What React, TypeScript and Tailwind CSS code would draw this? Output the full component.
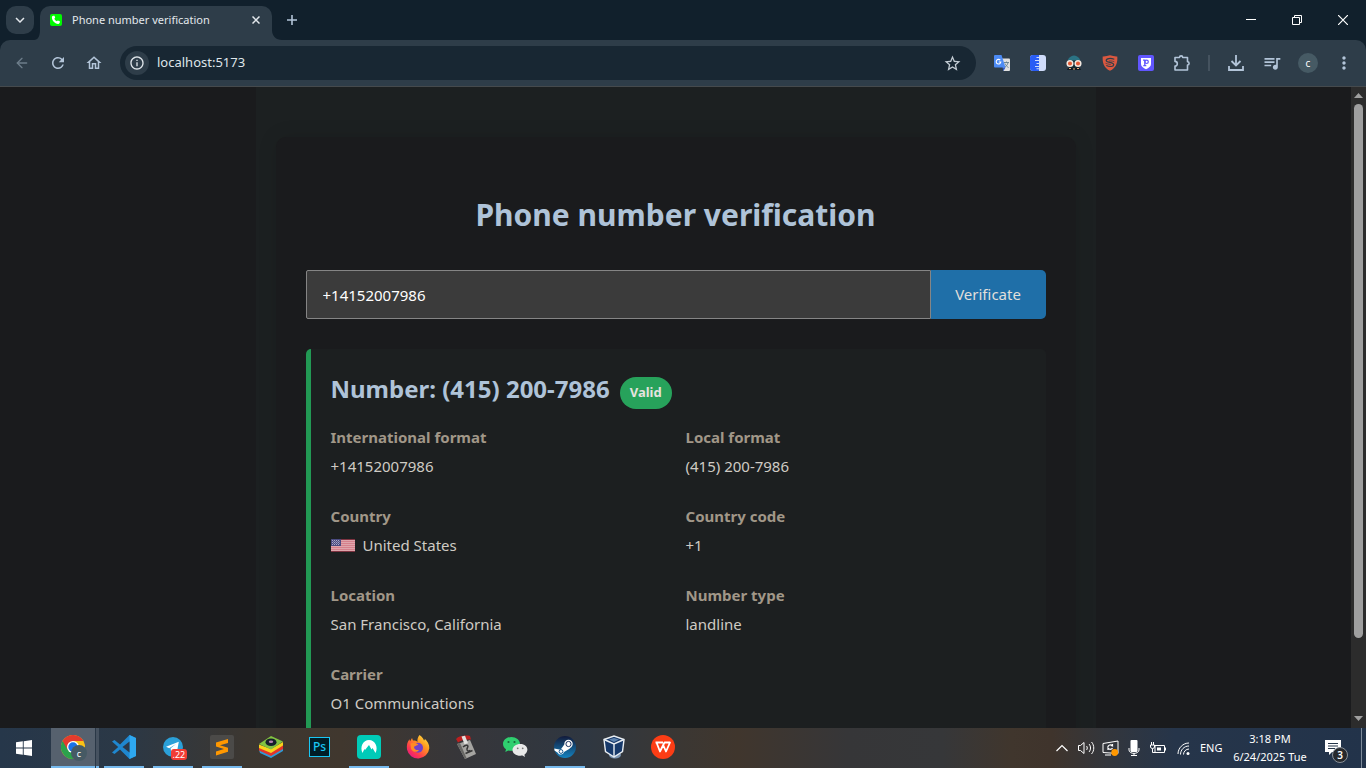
import React from "react";
import { ArrowLeft } from "lucide-react";
import {
  MdRefresh,
  MdOutlineHome,
  MdStarBorder,
  MdOutlineInfo,
  MdQueueMusic,
  MdMoreVert,
  MdKeyboardArrowDown,
} from "react-icons/md";

const iconButton = "flex size-9 shrink-0 items-center justify-center rounded-full text-[#b3c5d9]";

function TabStrip() {
  return (
    <div className="flex h-10 shrink-0 items-stretch justify-between bg-[#11202c]">
      <div className="flex">
        <button aria-label="Search tabs" className="mt-1.5 ml-1.5 flex size-7 items-center justify-center rounded-[10px] bg-[#2e3d49] text-[#e3e8ec]">
          <MdKeyboardArrowDown size={18} />
        </button>
        <div className="flex items-end">
          <svg width="6" height="10" viewBox="0 0 6 10" aria-hidden="true">
            <path d="M6 0v10H0c4 0 6-4 6-10z" fill="#2e3d49" />
          </svg>
        </div>
        <div className="mt-1.5 flex w-[232px] items-center rounded-t-[10px] bg-[#2e3d49] pr-3 pb-1.5 pl-2.5">
          <svg width="12" height="12" viewBox="0 0 12 12" aria-hidden="true">
            <rect width="12" height="12" rx="2" fill="#00f900" />
            <path d="M3.2 1.7l1.3.1.7 2-.9.9c.5 1.200 1.300 2 2.500 2.600l1-.9 2 .8c.4 1.500-.4 2.600-1.700 2.700C4.700 9.700 1.900 6.200 1.900 3.400c0-.9.5-1.600 1.300-1.700z" fill="#fff" />
          </svg>
          <span className="ml-2.5 flex-1 font-['Noto_Sans','Liberation_Sans',sans-serif] text-[11px] text-[#e3e8ec]">Phone number verification</span>
          <button aria-label="Close tab" className="flex size-2 items-center justify-center">
            <svg width="8" height="8" viewBox="0 0 8 8" stroke="#e3e8ec" strokeWidth="1.500">
              <path d="M.5.5l7 7M7.500.5l-7 7" />
            </svg>
          </button>
        </div>
        <div className="flex items-end">
          <svg width="10" height="10" viewBox="0 0 10 10" aria-hidden="true">
            <path d="M0 0v10h10C4 10 0 6 0 0z" fill="#2e3d49" />
          </svg>
        </div>
        <button aria-label="New tab" className="flex w-5 items-center justify-center text-[#b3c5d9]">
          <svg width="10" height="10" viewBox="0 0 10 10" stroke="currentColor" strokeWidth="1.600">
            <path d="M5 0v10M0 5h10" />
          </svg>
        </button>
      </div>
      <div className="flex text-white">
        <button aria-label="Minimize" className="flex w-[46px] items-center justify-center">
          <svg width="10" height="10" viewBox="0 0 10 10" stroke="currentColor"><path d="M0 4.500h10" /></svg>
        </button>
        <button aria-label="Restore" className="flex w-[46px] items-center justify-center">
          <svg width="10" height="10" viewBox="0 0 10 10" stroke="currentColor" fill="none">
            <path d="M.5 2.500h7v7h-7zM2.500 2.500v-2h7v7h-2" />
          </svg>
        </button>
        <button aria-label="Close" className="flex w-[46px] items-center justify-center">
          <svg width="10" height="10" viewBox="0 0 10 10" stroke="currentColor" strokeWidth="1.200"><path d="M0 0l10 10M10 0L0 10" /></svg>
        </button>
      </div>
    </div>
  );
}

function TranslateIcon() {
  return (
    <svg width="16" height="16" viewBox="0 0 16 16">
      <path d="M7 3.500h8a1 1 0 0 1 1 1V15a1 1 0 0 1-1 1H9.500z" fill="#e0e0e0" />
      <path d="M10 7.500h5M12.500 6.500v1M14 7.800c-.5 2-1.800 3.500-3.500 4.500M11 8.500c.6 1.600 1.800 3 3.500 4" stroke="#5f7d8c" strokeWidth=".9" fill="none" />
      <path d="M1 0h6.500l4 12.500H1a1 1 0 0 1-1-1V1a1 1 0 0 1 1-1z" fill="#4c8bf5" />
      <path d="M8.500 12.500h3L9.500 16z" fill="#2a56c6" />
      <path d="M6.300 5.200A2.300 2.300 0 1 0 6.800 7H4.800" stroke="#fff" strokeWidth="1.100" fill="none" />
    </svg>
  );
}

function RulerIcon() {
  return (
    <svg width="16" height="16" viewBox="0 0 16 16">
      <rect width="16" height="16" rx="3" fill="#cfdcfa" />
      <path d="M3 0h6v16H3a3 3 0 0 1-3-3V3a3 3 0 0 1 3-3z" fill="#2a5df5" />
      <path d="M6.500 2.500H9M5 5.500h4M6.500 8.500H9M5 11.500h4M6.500 13.800H9" stroke="#cfdcfa" strokeWidth="1.100" />
    </svg>
  );
}

function SpyIcon() {
  return (
    <svg width="16" height="16" viewBox="0 0 16 16">
      <path d="M1.500 7.500c0-4 2.500-6.500 6.500-7 4 .5 6.500 3 6.500 7z" fill="#2b7384" />
      <path d="M2 5.500h12v4l-2 5H4l-2-5z" fill="#142a31" />
      <path d="M1 15c.5-2 2-2.500 3.500-2.500L8 14l3.500-1.500c1.500 0 3 .5 3.500 2.500z" fill="#111c22" />
      <circle cx="4" cy="8.500" r="2.800" fill="#e45a35" stroke="#f3e8df" strokeWidth="1.500" />
      <circle cx="12" cy="8.500" r="2.800" fill="#e45a35" stroke="#f3e8df" strokeWidth="1.500" />
      <path d="M3 13.500h2M7 14h2M11 13.500h2" stroke="#e8a87c" strokeWidth="1.200" />
    </svg>
  );
}

function ShieldSIcon() {
  return (
    <svg width="16" height="16" viewBox="0 0 16 16">
      <path d="M8 .3c2.500.9 5 1.200 7.300 1.100.5 6.300-1.300 11.600-7.300 14.300C2 13 .2 7.700.7 1.400 3 1.500 5.500 1.200 8 .3z" fill="#db5840" />
      <path d="M12.300 4.200C8.500 3 4.300 3.200 4.200 5.500c0 2.500 7.600 1.200 7.500 4.100-.2 2.200-4 2.500-7.400.9" stroke="#2e3d49" strokeWidth="1.200" fill="none" />
      <path d="M12.300 6.700C10 5.900 7.500 5.700 6.800 6.200M3.500 8.300c2.500 1 4.800.8 5.400 1.600" stroke="#2e3d49" strokeWidth=".7" fill="none" />
    </svg>
  );
}

function ShieldPIcon() {
  return (
    <svg width="16" height="16" viewBox="0 0 16 16">
      <rect width="16" height="16" rx="2" fill="#6156ff" />
      <path d="M3 3h10v6c0 2.500-2.300 4-5 5.300C5.300 13 3 11.500 3 9z" fill="#fff" />
      <path d="M5 5.200h1.800v5.300M5.300 10.700h3" stroke="#6156ff" strokeWidth="1.300" fill="none" />
      <circle cx="8.600" cy="6.800" r="1.700" stroke="#6156ff" strokeWidth="1.200" fill="none" />
    </svg>
  );
}

function PuzzleIcon() {
  return (
    <svg width="18" height="18" viewBox="0 0 18 18" fill="none" stroke="currentColor" strokeWidth="1.600" strokeLinejoin="round">
      <path d="M2 3.500h4.500a1.600 1.600 0 0 1 3.200 0H14.500v4.300a1.600 1.600 0 0 1 0 3.200V16H2v-4a2.300 2.300 0 0 0 0-4.600z" />
    </svg>
  );
}

function Toolbar() {
  return (
    <div className="bg-[#11202c]">
      <div className="flex h-[47px] shrink-0 items-center rounded-t-[10px] border-b border-[#454a4d] bg-[#2e3d49] pr-1">
        <nav className="flex pl-1" aria-label="Browser">
          <button aria-label="Back" className="flex size-9 items-center justify-center text-[#6d7d8a]"><ArrowLeft size={16} strokeWidth={2} /></button>
          <button aria-label="Reload" className={iconButton}><MdRefresh size={18} /></button>
          <button aria-label="Home" className={iconButton}><MdOutlineHome size={18} /></button>
        </nav>
        <div className="ml-2 flex h-[34px] flex-1 items-center rounded-full bg-[#182733] pr-3.5 pl-[5px]">
          <button aria-label="Site information" className="flex size-6 items-center justify-center rounded-full bg-[#2e3d49] text-[#dfe5ea]">
            <MdOutlineInfo size={16} />
          </button>
          <input
            aria-label="Address"
            defaultValue="localhost:5173"
            className="ml-2 min-w-0 flex-1 bg-transparent font-['Noto_Sans','Liberation_Sans',sans-serif] text-[13px] text-[#dfe5ea] outline-none"
          />
          <button aria-label="Bookmark" className="text-[#c3ccd4]"><MdStarBorder size={19} /></button>
        </div>
        <div className="ml-2 flex items-center">
          <button aria-label="Translate" className={iconButton}><TranslateIcon /></button>
          <button aria-label="Ruler" className={iconButton}><RulerIcon /></button>
          <button aria-label="User agent" className={iconButton}><SpyIcon /></button>
          <button aria-label="Shield" className={iconButton}><ShieldSIcon /></button>
          <button aria-label="Protection" className={iconButton}><ShieldPIcon /></button>
          <button aria-label="Extensions" className={iconButton}><PuzzleIcon /></button>
          <div className="mx-2 h-4 w-0.5 bg-[#45535f]" />
          <button aria-label="Downloads" className={iconButton}>
            <svg width="16" height="16" viewBox="0 0 16 16" fill="none" stroke="currentColor" strokeWidth="1.800">
              <path d="M8 0v10M3.500 6L8 10.500 12.500 6M1 11v4h14v-4" />
            </svg>
          </button>
          <button aria-label="Media" className={iconButton}><MdQueueMusic size={20} /></button>
          <button aria-label="Profile" className={iconButton}>
            <span className="flex size-5 items-center justify-center rounded-full bg-[#465a64] font-['Noto_Sans',sans-serif] text-[10px] text-white">c</span>
          </button>
          <button aria-label="Menu" className={iconButton}><MdMoreVert size={20} /></button>
        </div>
      </div>
    </div>
  );
}

function UsFlag() {
  return (
    <svg width="24" height="13" viewBox="0 0 24 13" role="img" aria-label="United States flag">
      <rect width="24" height="13" fill="#dfa5ac" />
      <path d="M0 2.500h24M0 4.500h24M0 6.500h24M0 8.500h24M0 10.500h24" stroke="#d5808c" />
      <path d="M0 .5h24M0 12.500h24" stroke="#7d3340" />
      <rect width="10" height="7" fill="#4a4a80" />
      <path d="M1 1.500h8M1 3.500h8M1 5.500h8" stroke="#a9a9c6" strokeDasharray="1 1" />
      <path d="M2 2.500h8M2 4.500h8" stroke="#8787ae" strokeDasharray="1 1" />
    </svg>
  );
}

const details: { label: string; value: string; flag?: boolean }[] = [
  { label: "International format", value: "+14152007986" },
  { label: "Local format", value: "(415) 200-7986" },
  { label: "Country", value: "United States", flag: true },
  { label: "Country code", value: "+1" },
  { label: "Location", value: "San Francisco, California" },
  { label: "Number type", value: "landline" },
  { label: "Carrier", value: "O1 Communications" },
];

function VerificationPage() {
  return (
    <main className="flex min-w-0 flex-1 justify-center overflow-hidden bg-[#1a1b1d] font-['Noto_Sans','Open_Sans',sans-serif] text-[15px] text-[#cfcbc4]">
      <div className="w-full max-w-[840px] self-start bg-[#1c2021] px-5 py-[50px]">
        <section className="rounded-[10px] bg-[#1a1b1d] p-[30px] shadow-[0_0_20px_rgba(0,0,0,0.1)]">
          <h1 className="pt-5 pb-7 text-center text-[30px] leading-[55px] font-bold text-[#afc3d8]">Phone number verification</h1>
          <form className="flex" onSubmit={(e) => e.preventDefault()}>
            <input
              aria-label="Phone number"
              defaultValue="+14152007986"
              className="h-[49px] min-w-0 flex-1 rounded-l-[2px] border border-[#858585] bg-[#3b3b3b] px-4 text-white outline-none"
            />
            <button className="h-[49px] w-[115px] rounded-r-[5px] bg-[#1f6fa8] text-[#e1dfdb]">Verificate</button>
          </form>
          <article className="mt-[30px] rounded-[5px] border-l-[5px] border-[#229954] bg-[#1c1f20] px-5 pt-5 pb-10">
            <div className="flex items-center gap-2.5">
              <h2 className="text-2xl leading-8 font-bold text-[#afc3d8]">Number: (415) 200-7986</h2>
              <span className="mt-2 flex h-8 items-center rounded-full bg-[#27a25b] px-2.5 text-[13px] font-bold text-[#e5e3df]">Valid</span>
            </div>
            <dl className="mt-3.5 grid grid-cols-2 gap-x-[15px] gap-y-[21px]">
              {details.map((d) => (
                <div key={d.label}>
                  <dt className="leading-[29px] font-bold text-[#a19788]">{d.label}</dt>
                  <dd className="flex items-center gap-2 leading-[29px]">
                    {d.flag && <UsFlag />}
                    {d.value}
                  </dd>
                </div>
              ))}
            </dl>
          </article>
        </section>
      </div>
    </main>
  );
}

function ScrollBar() {
  return (
    <div className="flex w-[15px] shrink-0 flex-col items-center bg-[#2c2c2c]" aria-hidden="true">
      <svg width="15" height="17" viewBox="0 0 15 17"><path d="M3 11h9L7.500 6z" fill="#9f9f9f" /></svg>
      <div className="flex w-full flex-1 justify-center">
        <div className="h-[88%] w-[9px] rounded-full bg-[#9f9f9f]" />
      </div>
      <svg width="15" height="17" viewBox="0 0 15 17"><path d="M3 5h9l-4.500 5z" fill="#9f9f9f" /></svg>
    </div>
  );
}

function ChromeLogo() {
  return (
    <span className="relative flex">
      <svg width="24" height="24" viewBox="0 0 24 24">
        <circle cx="12" cy="12" r="12" fill="#fbc116" />
        <path d="M12 12L1.600 6A12 12 0 0 0 12 24l5.200-9z" fill="#2ba24c" />
        <path d="M1.600 6A12 12 0 0 1 22.400 6H12l-5.200 9z" fill="#e33b2e" />
        <circle cx="12" cy="12" r="6" fill="#fff" />
        <circle cx="12" cy="12" r="4.700" fill="#1a73e8" />
      </svg>
      <span className="absolute -right-0.5 -bottom-0.5 flex size-4 items-center justify-center rounded-full bg-[#465a64] text-[9px] leading-none text-white">c</span>
    </span>
  );
}

function VsCodeLogo() {
  return (
    <svg width="24" height="24" viewBox="0 0 24 24">
      <path d="M17.500 0L24 3v18l-6.500 3L8 14.600 2.500 19 0 17.600 6.200 12 0 6.400 2.500 5 8 9.400z" fill="#1f87cf" />
      <path d="M17.500 0L24 3v18l-6.500 3z" fill="#2ea8f0" />
      <path d="M17.500 6.500v11L10.500 12z" fill="#2b3949" />
    </svg>
  );
}

function TelegramLogo() {
  return (
    <span className="relative flex">
      <svg width="20" height="20" viewBox="0 0 20 20">
        <circle cx="10" cy="10" r="10" fill="#2ba0d8" />
        <path d="M3 9.800l12.800-5.100-2 11-3.700-2.800-2 2-.5-3.600L13 7l-6.800 4.200z" fill="#fff" />
      </svg>
      <span className="absolute top-3 left-2 rounded-[3px] bg-[#f23c34] px-0.5 font-['Noto_Sans',sans-serif] text-[9px] leading-[11px] text-white">.22</span>
    </span>
  );
}

function SublimeLogo() {
  return (
    <svg width="24" height="24" viewBox="0 0 24 24">
      <rect width="24" height="24" rx="2" fill="#4b4a48" />
      <path d="M6 7.500L18 4v4L10 10.300l8 2.500v4L6 20.400v-4l8-2.400-8-2.400z" fill="#ff9800" />
    </svg>
  );
}

function BlueStacksLogo() {
  return (
    <svg width="24" height="22" viewBox="0 0 24 22">
      <path d="M0 14l12 5 12-7v3L12 22 1 17z" fill="#2f9bd6" />
      <path d="M0 11l12 5 12-7v4l-12 7L0 14.500z" fill="#e3342b" />
      <path d="M0 8.500l12 4.500 12-7v3.500L12 17 0 12z" fill="#f8d31c" />
      <path d="M0 8L12 0l12 5.500L12 13.500z" fill="#82c341" />
      <ellipse cx="12" cy="6.200" rx="5.500" ry="3.800" fill="#15202b" />
      <ellipse cx="12" cy="5.800" rx="2.200" ry="1.300" fill="#b583b1" />
    </svg>
  );
}

function PhotoshopLogo() {
  return (
    <span className="flex h-5 w-[21px] items-center justify-center border border-[#19c7f5] bg-[#001d26] font-['Noto_Sans',sans-serif] text-[12px] leading-none font-medium text-[#19c7f5]">Ps</span>
  );
}

function NordLogo() {
  return (
    <svg width="24" height="24" viewBox="0 0 24 24">
      <rect width="24" height="24" rx="4" fill="#00cbb8" />
      <path d="M5.500 18C2.500 12 6 5 12 5s9.500 7 6.500 13l-3-5-1 1.600L12 10l-4 5-.6-1z" fill="#fff" />
    </svg>
  );
}

function FirefoxLogo() {
  return (
    <svg width="24" height="24" viewBox="0 0 24 24">
      <defs>
        <linearGradient id="fx" x1="1" y1="0" x2=".2" y2="1">
          <stop offset="0" stopColor="#fff44f" />
          <stop offset=".4" stopColor="#ff9a1f" />
          <stop offset=".75" stopColor="#ff3b4b" />
          <stop offset="1" stopColor="#e31587" />
        </linearGradient>
      </defs>
      <path d="M13.500 0c3 2 4 4 4.500 5.500 1-.4.800-1.700.8-1.700 2.600 2.200 4.700 6 4.500 9.500A11.300 11.300 0 0 1 1 14.500C.4 10 1.500 6.700 3.500 4.300L4 6.500l2-3.500 1 2.500c2 0 3.500.3 4.500 1.500C11 4.500 12 1.800 13.500 0z" fill="url(#fx)" />
      <circle cx="12" cy="12.800" r="5" fill="#7141c9" />
      <path d="M4.500 8.500c3-1.500 6-.7 8 1.500-2.500-.2-2.500 1.500-4.500 1.700 0 2.500 2.500 4 5 3.200-2 2.800-6.500 2.500-8-1.200z" fill="#ff8a25" />
    </svg>
  );
}

function UtilityLogo() {
  return (
    <svg width="24" height="24" viewBox="0 0 24 24">
      <path d="M2 9l13-4 6 14-11 5z" fill="#a5a4a1" />
      <path d="M2 9l3-1 6.500 15-1.500 1z" fill="#686764" />
      <path d="M8 12c3-3 6-2 4.500.5s0 4.500 3 3M10.500 18.500l7-3" stroke="#373737" strokeWidth="1.500" fill="none" />
      <path d="M1 4C4 .5 11 0 15 1l1 3.500C11 4 6 5 3 7.500z" fill="#bd1f1f" />
      <path d="M6.500 1.500l3.500-.8 3 7.500-3.500 1z" fill="#e1e1df" />
    </svg>
  );
}

function WeChatLogo() {
  return (
    <svg width="25" height="22" viewBox="0 0 25 22">
      <path d="M8.500 1C4 1 0 4 0 8c0 2.200 1.200 4 3 5.300L2.300 16l3-1.500c5 1.300 11.700-1 11.700-6.500 0-4-4-7-8.500-7z" fill="#2fcf6f" />
      <path d="M17.300 8C13 8 9.500 10.600 9.500 14s4 6.500 10 5.600L22 21l-.6-2.300c5.500-4 3-10.700-4.100-10.700z" fill="#e8e8e8" />
      <circle cx="5.500" cy="6" r="1.100" fill="#17673a" />
      <circle cx="11.500" cy="6" r="1.100" fill="#17673a" />
      <circle cx="14.700" cy="12.300" r=".9" fill="#777" />
      <circle cx="19.700" cy="12.300" r=".9" fill="#777" />
    </svg>
  );
}

function SteamLogo() {
  return (
    <svg width="22" height="22" viewBox="0 0 22 22">
      <defs>
        <linearGradient id="steam" x1="0" y1="0" x2="0" y2="1">
          <stop offset="0" stopColor="#121a3a" />
          <stop offset="1" stopColor="#1583c0" />
        </linearGradient>
      </defs>
      <circle cx="11" cy="11" r="11" fill="url(#steam)" />
      <path d="M.3 12.500l6.200 1.200 4-5.500 5.500 4.300-6 3.500a3.300 3.300 0 0 1-6.200.7L.5 14.500z" fill="#fff" />
      <circle cx="14.500" cy="8" r="4.200" fill="#fff" />
      <circle cx="14.500" cy="8" r="2.600" fill="none" stroke="#1a3260" strokeWidth="1" />
      <circle cx="7" cy="15.500" r="1.900" fill="none" stroke="#19588e" strokeWidth="1" />
    </svg>
  );
}

function VirtualBoxLogo() {
  return (
    <svg width="22" height="24" viewBox="0 0 22 24">
      <ellipse cx="12" cy="20" rx="6" ry="3.500" fill="#7e98b5" />
      <path d="M1 4.500L11 1l10 3.500-1.500 12L11 22l-8.500-5.500z" fill="#17396a" stroke="#e9eef3" strokeWidth="1.400" />
      <path d="M1 4.500L11 9l10-4.500M11 9v13" stroke="#e9eef3" strokeWidth="1.400" fill="none" />
      <path d="M6 4.500L11 3l5 1.500L11 7z" fill="#5e83ae" />
    </svg>
  );
}

function WpsLogo() {
  return (
    <svg width="24" height="24" viewBox="0 0 24 24">
      <circle cx="12" cy="12" r="12" fill="#fc3d15" />
      <path d="M4.500 7.500h7.500M5.500 7.500l3.500 9 3.200-6.500 2.800 6.500 4-9h-5.500l-1.300 2.500" stroke="#fff" strokeWidth="1.800" fill="none" strokeLinejoin="round" />
    </svg>
  );
}

const apps: { name: string; icon: React.ReactNode; open?: boolean }[] = [
  { name: "Visual Studio Code", icon: <VsCodeLogo />, open: true },
  { name: "Telegram", icon: <TelegramLogo />, open: true },
  { name: "Sublime Text", icon: <SublimeLogo />, open: true },
  { name: "BlueStacks", icon: <BlueStacksLogo /> },
  { name: "Photoshop", icon: <PhotoshopLogo /> },
  { name: "NordVPN", icon: <NordLogo />, open: true },
  { name: "Firefox", icon: <FirefoxLogo /> },
  { name: "Utility", icon: <UtilityLogo /> },
  { name: "WeChat", icon: <WeChatLogo /> },
  { name: "Steam", icon: <SteamLogo />, open: true },
  { name: "VirtualBox", icon: <VirtualBoxLogo /> },
  { name: "WPS Office", icon: <WpsLogo /> },
];

function SystemTray() {
  return (
    <div className="flex items-center text-white">
      <button aria-label="Show hidden icons" className="flex w-6 justify-center">
        <svg width="12" height="8" viewBox="0 0 12 8" fill="none" stroke="currentColor" strokeWidth="1.200"><path d="M.5 7L6 1.500 11.500 7" /></svg>
      </button>
      <button aria-label="Volume" className="flex w-6 justify-center">
        <svg width="17" height="14" viewBox="0 0 17 14" fill="none" stroke="currentColor"><path d="M.5 4.500h2l3.500-3v11l-3.500-3h-2zM8.500 5c1 1 1 3 0 4M11 3c2 2.200 2 5.800 0 8M13.500 1c3 3.300 3 8.700 0 12" /></svg>
      </button>
      <button aria-label="Updates" className="flex w-6 justify-center">
        <svg width="17" height="16" viewBox="0 0 17 16" fill="none" stroke="currentColor">
          <path d="M1 3.500l15-2.500v12.500L1 12.500zM3 15h6" />
          <path d="M6 7c0-2 3-3 4.500-1.300V4M10.500 5.700H8.800M10.500 8c-1 1.800-3.500 1.800-4.500 0v2" strokeWidth="1.200" />
          <circle cx="12.700" cy="12.500" r="3.400" fill="#ff9800" stroke="none" />
        </svg>
      </button>
      <button aria-label="Microphone" className="flex w-6 justify-center">
        <svg width="12" height="16" viewBox="0 0 12 16" fill="none" stroke="currentColor"><rect x="2.500" y="0" width="7" height="12" rx="1" fill="currentColor" stroke="none" /><path d="M1 8v2c0 4.500 10 4.500 10 0V8M6 13v2.500M3 15.500h6" /></svg>
      </button>
      <button aria-label="Battery" className="flex w-6 justify-center">
        <svg width="16" height="12" viewBox="0 0 16 12" fill="none" stroke="currentColor"><path d="M5 3.500h9.500v7H5zM15.500 5.500v3M.5 3h4v2c0 2-4 2-4 0zM1.500 0v3M3.500 0v3M2.500 6.500v4H5" /><path d="M7 5.500h4v3H7z" fill="currentColor" stroke="none" /></svg>
      </button>
      <button aria-label="Network" className="flex w-[26px] justify-center">
        <svg width="13" height="13" viewBox="0 0 13 13" fill="none" stroke="currentColor"><path d="M1 12C1 6 6 1 12 1M3.500 12.500C3.500 8 7 4 12 4M6.500 12.500C6.500 9.500 9 7 12 7" /><circle cx="11" cy="11.500" r="1.500" fill="currentColor" stroke="none" /></svg>
      </button>
      <button className="w-8 pl-1 text-left text-[11px]">ENG</button>
      <button className="flex w-[84px] flex-col items-center text-[11px] leading-[18px]">
        <span>3:18 PM</span>
        <span>6/24/2025 Tue</span>
      </button>
      <button aria-label="Notifications, 3 new" className="relative mr-[7px] flex w-[42px] justify-center">
        <svg width="16" height="16" viewBox="0 0 16 16"><path d="M0 0h16v12H7l-3 3v-3H0z" fill="#fff" /><path d="M3 3.500h10M3 6h10M3 8.500h7" stroke="#26364a" /></svg>
        <span className="absolute top-[7px] left-5 flex size-4 items-center justify-center rounded-full border border-[#8b929a] bg-[#26292d] text-[10px] leading-none font-semibold">3</span>
      </button>
      <div className="h-10 w-px bg-[#7d8a99]" />
      <div className="w-1" />
    </div>
  );
}

function Taskbar() {
  return (
    <footer className="flex h-10 shrink-0 justify-between bg-[linear-gradient(90deg,#26374a_0%,#2b3846_9%,#3c3731_18%,#40372e_25%,#36363a_34%,#2f3741_43%,#3b3733_50%,#40362d_54%,#363638_62%,#363739_69%,#40362d_74%,#3f342c_77%,#33363c_81%,#26354a_86%,#22334a_100%)] font-['Noto_Sans',sans-serif]">
      <div className="flex">
        <button aria-label="Start" className="flex w-12 items-center justify-center">
          <svg width="16" height="16" viewBox="0 0 16 16" fill="#fff"><path d="M0 2.300L6.800 1.300v6.200H0zM7.700 1.200L16 0v7.500H7.700zM0 8.400h6.800v6.300L0 13.700zM7.700 8.400H16V16l-8.300-1.200z" /></svg>
        </button>
        <div className="ml-[3px] flex w-12">
          <button aria-label="Chrome" className="flex w-11 items-center justify-center border-b-2 border-[#76b9ed] bg-[#56616e]">
            <ChromeLogo />
          </button>
          <div className="ml-px w-[3px] border-b-2 border-[#76b9ed] bg-[#465260]" />
        </div>
        {apps.map((a) => (
          <button key={a.name} aria-label={a.name} className="flex w-[49px] items-stretch justify-center">
            <span className={a.open ? "flex w-10 items-center justify-center border-b-2 border-[#76b9ed]" : "flex w-10 items-center justify-center border-b-2 border-transparent"}>{a.icon}</span>
          </button>
        ))}
      </div>
      <SystemTray />
    </footer>
  );
}

export default function App() {
  return (
    <div className="flex h-screen flex-col overflow-hidden">
      <TabStrip />
      <Toolbar />
      <div className="flex min-h-0 flex-1">
        <VerificationPage />
        <ScrollBar />
      </div>
      <Taskbar />
    </div>
  );
}
